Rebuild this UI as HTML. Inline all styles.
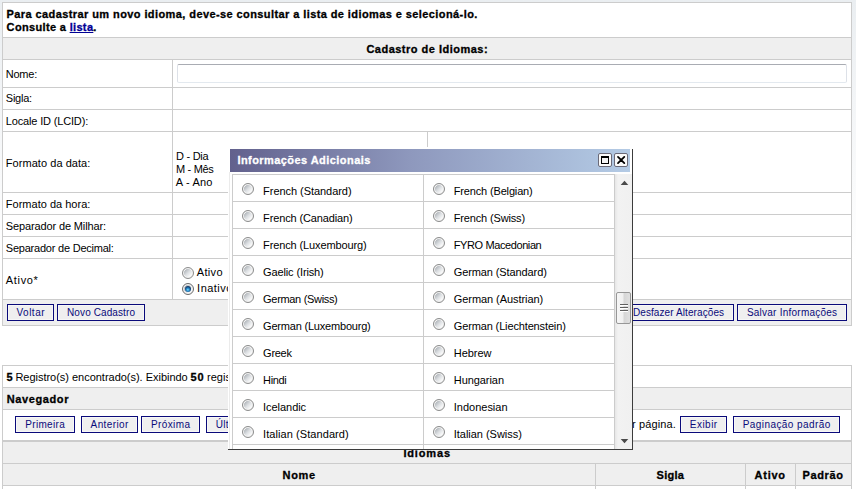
<!DOCTYPE html>
<html lang="pt-BR">
<head>
<meta charset="utf-8">
<title>Cadastro de Idiomas</title>
<style>
html,body{margin:0;padding:0}
body{width:856px;height:489px;overflow:hidden;position:relative;background:linear-gradient(to bottom,#eaeef1 0,#f3f5f7 100px,#ffffff 260px);font-family:"Liberation Sans",sans-serif;font-size:11px;color:#000}
div,span{box-sizing:border-box}
.box{position:absolute;border:1px solid #ccc;background:#fff}
.hl{position:absolute;height:1px;background:#ccc}
.vl{position:absolute;width:1px;background:#ccc}
.g{position:absolute;background:#efefef}
.t{position:absolute;white-space:nowrap;line-height:13px;font-size:11px}
.b{font-weight:bold;-webkit-text-stroke:0.3px}
.btn{position:absolute;height:17px;border:1px solid #0a0a7a;background:#efefef;color:#0a0a7a;font-size:10px;line-height:15px;text-align:center;box-shadow:inset 0 0 0 1px #f7f7f7;white-space:nowrap;overflow:hidden}
a{color:#000094}
.radio{position:absolute;width:12px;height:12px;border-radius:50%;border:1px solid #8b8c8c;background:radial-gradient(circle closest-side,rgba(242,242,242,0) 74%,#f2f2f2 84%),linear-gradient(135deg,#b0b5ba 20%,#dde0e3 50%,#fdfdfd 80%)}
.radio.on{border-color:#6a6b6b}
.radio.on::after{content:"";position:absolute;left:2px;top:2px;width:6px;height:6px;border-radius:50%;background:radial-gradient(circle at 48% 62%,#8fdcf8 0,#2a96d6 26%,#153f70 62%,#12335c 100%)}
#pop{position:absolute;left:228px;top:147px;width:405px;height:303px;background:#fff;border-bottom:1px solid #3c3c3c;overflow:hidden}
#rb{position:absolute;left:404px;top:2px;width:1px;height:301px;background:#3c3c3c}
#ttl{position:absolute;left:2px;top:2px;width:400px;height:23px;background:linear-gradient(to right,#62618d 0,#8e98bd 45%,#b4cbe5 100%)}
.wb{position:absolute;top:4px;width:14px;height:14px;border:1px solid #6a6a78;border-radius:2px;background:#fafafa}
#lst{position:absolute;left:4px;top:27px;width:383px;height:275px;border:1px solid #ccc;border-bottom:0;overflow:hidden}
#sb{position:absolute;left:387px;top:27px;width:17px;height:275px;background:linear-gradient(to right,#e6e6e6 0,#f2f2f2 3px,#f0f0f0 100%)}
#thumb{position:absolute;left:1px;top:118px;width:15px;height:32px;border:1px solid #979797;border-radius:2px;background:linear-gradient(to right,#f6f6f6 0,#f0f0f0 45%,#d6d6d6 55%,#e0e0e0 100%)}
#grip{position:absolute;left:3px;top:11px;width:8px;height:1px;background:#606060;box-shadow:0 3px 0 #606060,0 6px 0 #606060,0 1px 0 #fff,0 4px 0 #fff,0 7px 0 #fff}
</style>
</head>
<body>

<!-- form table -->
<div class="box" style="left:2px;top:2px;width:850px;height:324px"></div>
<div class="g" style="left:3px;top:38px;width:848px;height:21px"></div>
<div class="g" style="left:3px;top:300px;width:848px;height:25px"></div>
<div class="hl" style="left:3px;top:37px;width:848px"></div>
<div class="hl" style="left:3px;top:59px;width:848px"></div>
<div class="hl" style="left:3px;top:87px;width:848px"></div>
<div class="hl" style="left:3px;top:109px;width:848px"></div>
<div class="hl" style="left:3px;top:131px;width:848px"></div>
<div class="hl" style="left:3px;top:192px;width:848px"></div>
<div class="hl" style="left:3px;top:214px;width:848px"></div>
<div class="hl" style="left:3px;top:236px;width:848px"></div>
<div class="hl" style="left:3px;top:258px;width:848px"></div>
<div class="hl" style="left:3px;top:299px;width:848px"></div>
<div class="vl" style="left:172px;top:60px;height:239px"></div>
<div class="vl" style="left:427px;top:132px;height:60px"></div>
<div style="position:absolute;left:177px;top:64px;width:670px;height:19px;border:1px solid #dde1e8;border-top-color:#a9acb3;border-bottom-color:#e3e9ef;border-radius:2px;background:#fff"></div>
<div class="radio" style="left:182px;top:267px"></div>
<div class="radio on" style="left:182px;top:283px"></div>
<!-- list table -->
<div class="box" style="left:2px;top:365px;width:850px;height:140px"></div>
<div class="g" style="left:3px;top:388px;width:848px;height:21px"></div>
<div class="g" style="left:3px;top:442px;width:848px;height:43px"></div>
<div class="hl" style="left:3px;top:387px;width:848px"></div>
<div class="hl" style="left:3px;top:409px;width:848px"></div>
<div class="hl" style="left:3px;top:440px;width:848px"></div>
<div class="hl" style="left:3px;top:441px;width:848px"></div>
<div class="hl" style="left:3px;top:463px;width:848px"></div>
<div class="hl" style="left:3px;top:485px;width:848px"></div>
<div class="vl" style="left:595px;top:464px;height:30px"></div>
<div class="vl" style="left:745px;top:464px;height:30px"></div>
<div class="vl" style="left:795px;top:464px;height:30px"></div>
<span class="t b" style="left:6.6px;top:8px;letter-spacing:0.41px">Para cadastrar um novo idioma, deve-se consultar a lista de idiomas e selecioná-lo.</span>
<span class="t b" style="left:6.6px;top:21px;letter-spacing:0.34px">Consulte a <a href="#">lista</a>.</span>
<span class="t b" style="left:366.4px;top:43px;letter-spacing:0.49px">Cadastro de Idiomas:</span>
<span class="t" style="left:5.8px;top:68px;letter-spacing:-0.25px">Nome:</span>
<span class="t" style="left:5.8px;top:92px;letter-spacing:-0.23px">Sigla:</span>
<span class="t" style="left:5.8px;top:115px;letter-spacing:-0.16px">Locale ID (LCID):</span>
<span class="t" style="left:5.8px;top:157px;letter-spacing:0.05px">Formato da data:</span>
<span class="t" style="left:175.9px;top:150px;letter-spacing:-0.24px">D - Dia</span>
<span class="t" style="left:175.9px;top:163px;letter-spacing:-0.29px">M - Mês</span>
<span class="t" style="left:175.8px;top:176px;letter-spacing:0.17px">A - Ano</span>
<span class="t" style="left:5.8px;top:198px;letter-spacing:0.01px">Formato da hora:</span>
<span class="t" style="left:5.8px;top:220px;letter-spacing:-0.13px">Separador de Milhar:</span>
<span class="t" style="left:5.8px;top:242px;letter-spacing:-0.22px">Separador de Decimal:</span>
<span class="t" style="left:5.8px;top:274px;letter-spacing:0.67px">Ativo*</span>
<span class="t" style="left:196.8px;top:266px;letter-spacing:0.33px">Ativo</span>
<span class="t" style="left:197.1px;top:282px;letter-spacing:0.48px">Inativo</span>
<span class="t b" style="left:6.6px;top:371px;letter-spacing:0.87px">5</span>
<span class="t" style="left:15.4px;top:371px;letter-spacing:-0.02px">Registro(s) encontrado(s). Exibindo</span>
<span class="t b" style="left:190.6px;top:371px;letter-spacing:0.90px">50</span>
<span class="t" style="left:206.9px;top:371px;letter-spacing:0.09px">registro(s) por página.</span>
<span class="t b" style="left:6.7px;top:393px;letter-spacing:0.61px">Navegador</span>
<span class="t" style="left:565.9px;top:418px;letter-spacing:0.10px">registro(s) por página.</span>
<span class="t b" style="left:403.4px;top:447px;letter-spacing:0.85px">Idiomas</span>
<span class="t b" style="left:282.5px;top:469px;letter-spacing:0.71px">Nome</span>
<span class="t b" style="left:656.6px;top:469px;letter-spacing:0.23px">Sigla</span>
<span class="t b" style="left:754.6px;top:469px;letter-spacing:0.75px">Ativo</span>
<span class="t b" style="left:802.4px;top:469px;letter-spacing:0.68px">Padrão</span>
<div class="btn" style="left:7px;top:304px;width:47px;letter-spacing:0.50px;text-indent:0.50px">Voltar</div>
<div class="btn" style="left:57px;top:304px;width:88px;letter-spacing:0.10px;text-indent:0.10px">Novo Cadastro</div>
<div class="btn" style="left:623px;top:304px;width:111px;letter-spacing:0.09px;text-indent:0.09px">Desfazer Alterações</div>
<div class="btn" style="left:737px;top:304px;width:110px;letter-spacing:0.24px;text-indent:0.24px">Salvar Informações</div>
<div class="btn" style="left:15px;top:416px;width:60px;letter-spacing:0.32px;text-indent:0.32px">Primeira</div>
<div class="btn" style="left:81px;top:416px;width:57px;letter-spacing:0.40px;text-indent:0.40px">Anterior</div>
<div class="btn" style="left:141px;top:416px;width:59px;letter-spacing:0.37px;text-indent:0.37px">Próxima</div>
<div class="btn" style="left:206px;top:416px;width:49px;letter-spacing:0.25px;text-indent:0.25px">Última</div>
<div class="btn" style="left:680px;top:416px;width:47px;letter-spacing:0.46px;text-indent:0.46px">Exibir</div>
<div class="btn" style="left:733px;top:416px;width:107px;letter-spacing:0.43px;text-indent:0.43px">Paginação padrão</div>
<!-- popup window -->
<div id="pop">
 <div id="rb"></div>
 <div class="vl" style="left:1px;top:25px;height:277px;background:#ebebeb"></div>
 <div id="ttl">
  <span class="t b" style="left:7.4px;top:5px;letter-spacing:0.44px;color:#fff">Informações Adicionais</span>
  <div class="wb" style="left:368px"><div style="position:absolute;left:2px;top:2px;width:8px;height:8px;border:1px solid #000;border-top-width:2px;background:#f4f4f4"></div></div>
  <div class="wb" style="left:384px"><svg width="12" height="12" viewBox="0 0 12 12" style="position:absolute;left:0;top:0"><path d="M3 2.9 L9.3 9.1 M9.3 2.9 L3 9.1" stroke="#000" stroke-width="1.8" stroke-linecap="round" fill="none"/></svg></div>
 </div>
 <div id="lst">
  <div class="radio" style="left:9px;top:8px"></div>
  <span class="t" style="left:30.1px;top:10px;letter-spacing:-0.05px">French (Standard)</span>
  <div class="radio" style="left:200px;top:8px"></div>
  <span class="t" style="left:220.8px;top:10px;letter-spacing:-0.16px">French (Belgian)</span>
  <div class="hl" style="left:0;top:26px;width:381px"></div>
  <div class="radio" style="left:9px;top:35px"></div>
  <span class="t" style="left:30.1px;top:37px;letter-spacing:-0.13px">French (Canadian)</span>
  <div class="radio" style="left:200px;top:35px"></div>
  <span class="t" style="left:220.8px;top:37px;letter-spacing:-0.16px">French (Swiss)</span>
  <div class="hl" style="left:0;top:53px;width:381px"></div>
  <div class="radio" style="left:9px;top:62px"></div>
  <span class="t" style="left:30.1px;top:64px;letter-spacing:-0.12px">French (Luxembourg)</span>
  <div class="radio" style="left:200px;top:62px"></div>
  <span class="t" style="left:220.8px;top:64px;letter-spacing:-0.40px">FYRO Macedonian</span>
  <div class="hl" style="left:0;top:80px;width:381px"></div>
  <div class="radio" style="left:9px;top:89px"></div>
  <span class="t" style="left:30.1px;top:91px;letter-spacing:-0.13px">Gaelic (Irish)</span>
  <div class="radio" style="left:200px;top:89px"></div>
  <span class="t" style="left:220.8px;top:91px;letter-spacing:-0.11px">German (Standard)</span>
  <div class="hl" style="left:0;top:107px;width:381px"></div>
  <div class="radio" style="left:9px;top:116px"></div>
  <span class="t" style="left:30.1px;top:118px;letter-spacing:-0.32px">German (Swiss)</span>
  <div class="radio" style="left:200px;top:116px"></div>
  <span class="t" style="left:220.8px;top:118px;letter-spacing:-0.07px">German (Austrian)</span>
  <div class="hl" style="left:0;top:134px;width:381px"></div>
  <div class="radio" style="left:9px;top:143px"></div>
  <span class="t" style="left:30.1px;top:145px;letter-spacing:-0.20px">German (Luxembourg)</span>
  <div class="radio" style="left:200px;top:143px"></div>
  <span class="t" style="left:220.8px;top:145px;letter-spacing:-0.14px">German (Liechtenstein)</span>
  <div class="hl" style="left:0;top:161px;width:381px"></div>
  <div class="radio" style="left:9px;top:170px"></div>
  <span class="t" style="left:30.1px;top:172px;letter-spacing:-0.27px">Greek</span>
  <div class="radio" style="left:200px;top:170px"></div>
  <span class="t" style="left:220.8px;top:172px;letter-spacing:-0.04px">Hebrew</span>
  <div class="hl" style="left:0;top:188px;width:381px"></div>
  <div class="radio" style="left:9px;top:197px"></div>
  <span class="t" style="left:30.1px;top:199px;letter-spacing:-0.37px">Hindi</span>
  <div class="radio" style="left:200px;top:197px"></div>
  <span class="t" style="left:220.8px;top:199px;letter-spacing:-0.07px">Hungarian</span>
  <div class="hl" style="left:0;top:215px;width:381px"></div>
  <div class="radio" style="left:9px;top:224px"></div>
  <span class="t" style="left:30.1px;top:226px;letter-spacing:-0.05px">Icelandic</span>
  <div class="radio" style="left:200px;top:224px"></div>
  <span class="t" style="left:220.8px;top:226px;letter-spacing:-0.01px">Indonesian</span>
  <div class="hl" style="left:0;top:242px;width:381px"></div>
  <div class="radio" style="left:9px;top:251px"></div>
  <span class="t" style="left:30.1px;top:253px;letter-spacing:0.07px">Italian (Standard)</span>
  <div class="radio" style="left:200px;top:251px"></div>
  <span class="t" style="left:220.8px;top:253px;letter-spacing:-0.03px">Italian (Swiss)</span>
  <div class="hl" style="left:0;top:269px;width:381px"></div>
  <div class="vl" style="left:190px;top:0;height:275px"></div>
 </div>
 <div id="sb">
  <svg width="17" height="17" viewBox="0 0 17 17" style="position:absolute;left:0;top:0"><path d="M5.7 11 L9.5 6.8 L13.3 11 Z" fill="#4a4a4a"/></svg>
  <div id="thumb"><div id="grip"></div></div>
  <svg width="17" height="17" viewBox="0 0 17 17" style="position:absolute;left:0;top:258px"><path d="M5.7 7 L13.3 7 L9.5 11.2 Z" fill="#4a4a4a"/></svg>
 </div>
</div>
</body>
</html>
